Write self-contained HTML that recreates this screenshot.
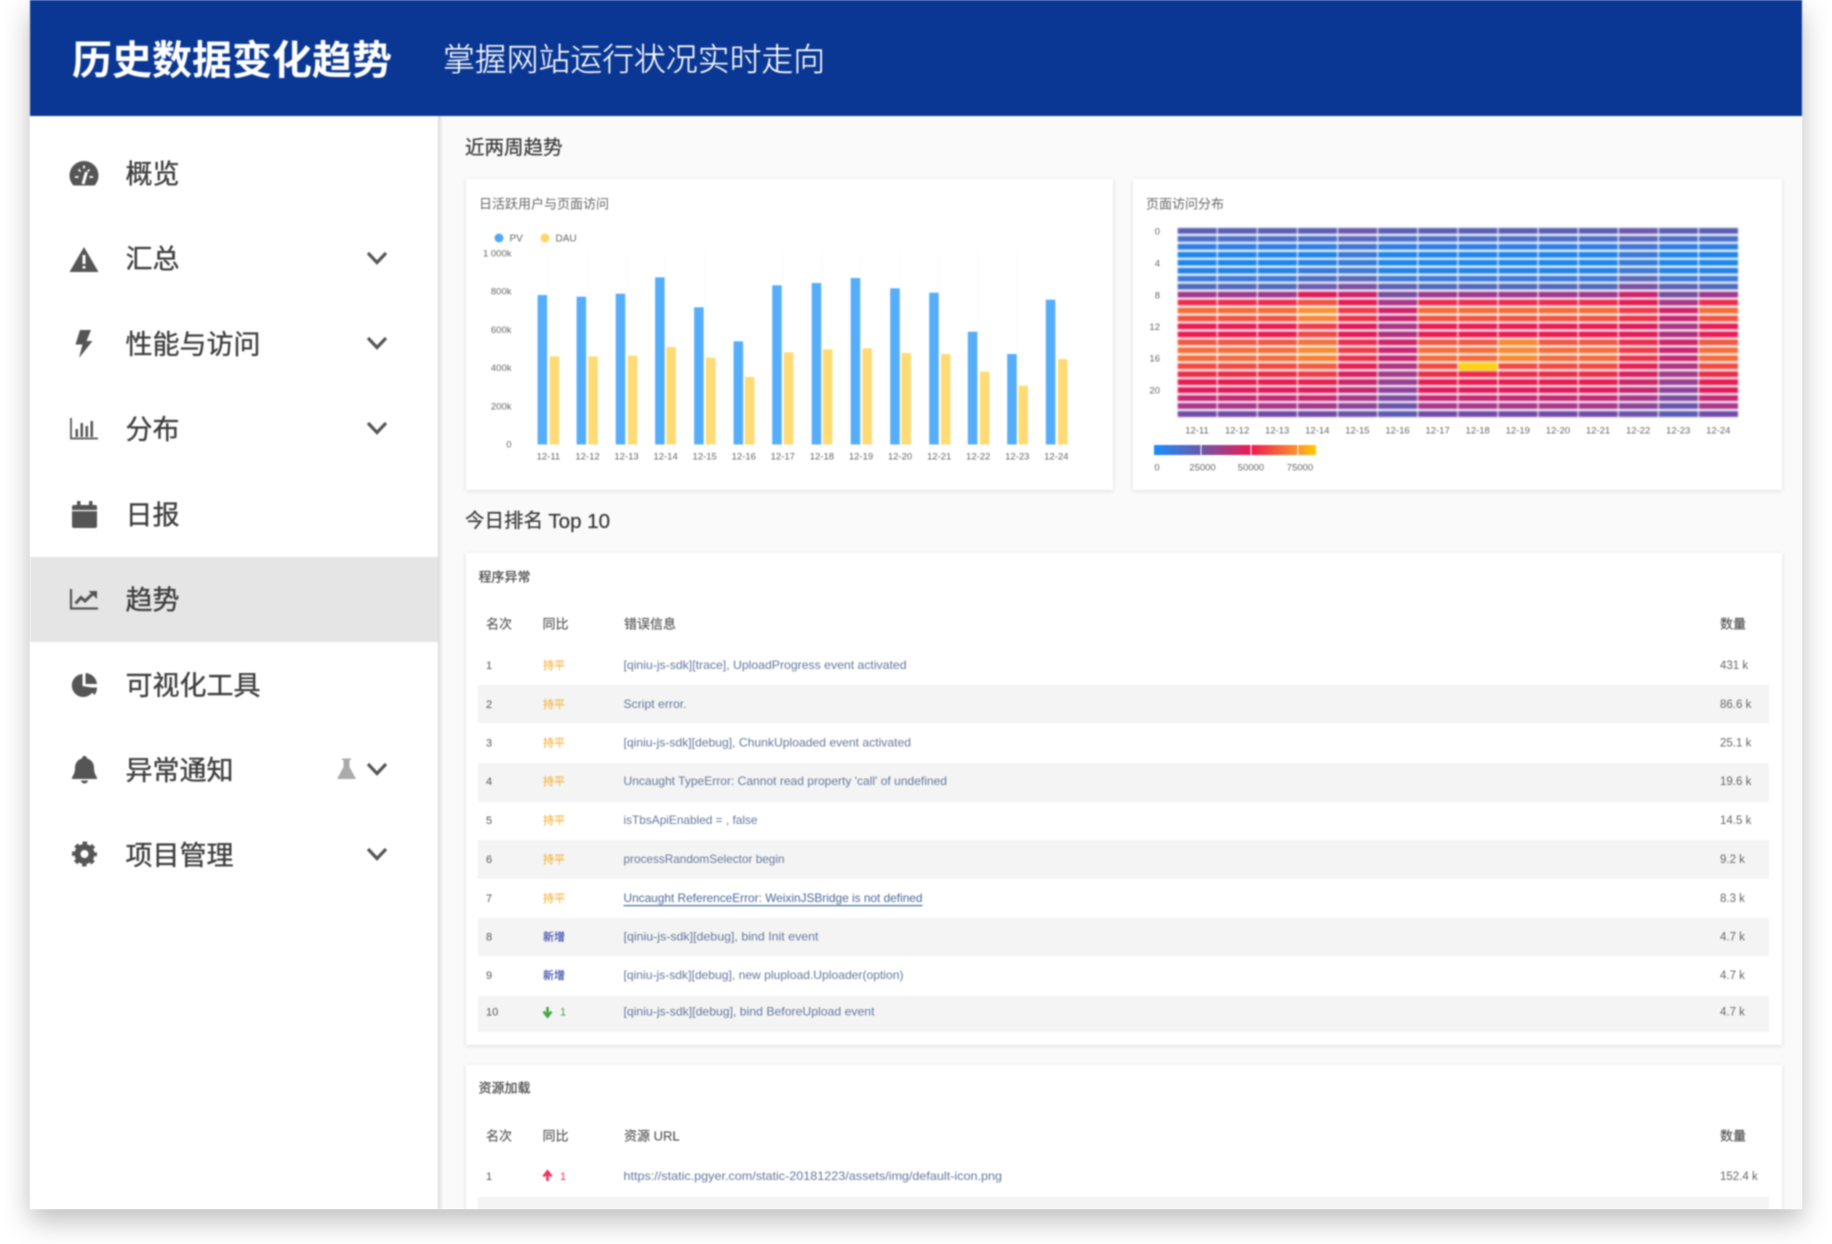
<!DOCTYPE html>
<html lang="zh"><head><meta charset="utf-8"><title>历史数据变化趋势</title>
<style>
html,body{margin:0;padding:0;background:#fff;width:1832px;height:1244px;overflow:hidden}
#sh{position:absolute;left:30px;top:0;width:1772px;height:1209px;box-shadow:0 12px 26px rgba(0,0,0,.26)}
svg{position:absolute;left:0;top:0;filter:blur(.7px)}
text{font-family:"Liberation Sans","Noto Sans CJK SC",sans-serif;dominant-baseline:central;transform:translateY(1px)}
.nav{font-size:27px;fill:#3d3d3d;stroke:#3d3d3d;stroke-width:.35px}
.sec{font-size:19.5px;fill:#3a3a3a;stroke:#3a3a3a;stroke-width:.25px}
.ct{font-size:13px;fill:#666}
.ct2{font-size:13px;fill:#444;stroke:#444;stroke-width:.2px;transform:none}
.ax{font-size:9.5px;fill:#666}
.m{text-anchor:middle;transform:none}.e{text-anchor:end}
.th{font-size:13px;fill:#555;stroke:#555;stroke-width:.15px;transform:none}
.n{font-size:11px;fill:#555}
.f{font-size:11px;fill:#f7b544;stroke:#f7b544;stroke-width:.15px}
.x{font-size:11px;fill:#4050b0;stroke:#4050b0;stroke-width:.2px}
.l{font-size:12px;fill:#64789c;transform:none}
.c{font-size:11.5px;fill:#666}
.card{filter:drop-shadow(0 1px 2px rgba(0,0,0,.12))}
.hm{filter:blur(.7px)}
#N rect,#W rect,#R rect,#P rect{width:39px;height:5.8px}
</style></head><body>
<div id="sh"></div>
<svg width="1832" height="1244" viewBox="0 0 1832 1244" xmlns="http://www.w3.org/2000/svg">
<defs>
<clipPath id="w"><rect x="30" y="0" width="1772" height="1209"/></clipPath>
<linearGradient id="sg" x1="0" x2="1"><stop offset="0" stop-color="#000" stop-opacity=".13"/><stop offset="1" stop-color="#000" stop-opacity="0"/></linearGradient>
<linearGradient id="lg" x1="0" x2="1"><stop offset="0" stop-color="#1890ff"/><stop offset=".29" stop-color="#6a58ac"/><stop offset=".6" stop-color="#ee1a50"/><stop offset=".88" stop-color="#fa9030"/><stop offset="1" stop-color="#ffcc00"/></linearGradient>
<g id="N"><rect y="0" fill="#5a5cb4"/><rect y="8" fill="#4a70c8"/><rect y="15.9" fill="#2b7de4"/><rect y="23.9" fill="#1a84ec"/><rect y="31.8" fill="#1a84ec"/><rect y="39.8" fill="#2280e6"/><rect y="47.8" fill="#3c78d8"/><rect y="55.7" fill="#5068bc"/><rect y="63.7" fill="#a0358f"/><rect y="71.6" fill="#ee2a4a"/><rect y="79.6" fill="#f56a35"/><rect y="87.6" fill="#f3503f"/><rect y="95.5" fill="#e81a50"/><rect y="103.5" fill="#ec1850"/><rect y="111.4" fill="#f3553f"/><rect y="119.4" fill="#f46c38"/><rect y="127.4" fill="#f36a3a"/><rect y="135.3" fill="#f0483f"/><rect y="143.3" fill="#ea2a48"/><rect y="151.2" fill="#e81850"/><rect y="159.2" fill="#e0185a"/><rect y="167.2" fill="#c62673"/><rect y="175.1" fill="#a83488"/><rect y="183.1" fill="#7048a8"/></g>
<g id="W"><rect y="0" fill="#5a5cb4"/><rect y="8" fill="#4a70c8"/><rect y="15.9" fill="#2b7de4"/><rect y="23.9" fill="#1a84ec"/><rect y="31.8" fill="#2280e6"/><rect y="39.8" fill="#3478dc"/><rect y="47.8" fill="#4c6cc4"/><rect y="55.7" fill="#6a5cb0"/><rect y="63.7" fill="#e0185a"/><rect y="71.6" fill="#f25040"/><rect y="79.6" fill="#fa9030"/><rect y="87.6" fill="#f88535"/><rect y="95.5" fill="#ee3a48"/><rect y="103.5" fill="#f04545"/><rect y="111.4" fill="#f5703a"/><rect y="119.4" fill="#f88a32"/><rect y="127.4" fill="#f8802f"/><rect y="135.3" fill="#f25a3a"/><rect y="143.3" fill="#ee3a45"/><rect y="151.2" fill="#e81c50"/><rect y="159.2" fill="#e0185a"/><rect y="167.2" fill="#c82670"/><rect y="175.1" fill="#a53488"/><rect y="183.1" fill="#7048a8"/></g>
<g id="R"><rect y="0" fill="#6a58ac"/><rect y="8" fill="#5a68bc"/><rect y="15.9" fill="#4074d0"/><rect y="23.9" fill="#3478d8"/><rect y="31.8" fill="#3478d8"/><rect y="39.8" fill="#3c78d4"/><rect y="47.8" fill="#5a68b8"/><rect y="55.7" fill="#7a50a4"/><rect y="63.7" fill="#d0206a"/><rect y="71.6" fill="#e81850"/><rect y="79.6" fill="#ee3a48"/><rect y="87.6" fill="#ec3048"/><rect y="95.5" fill="#e01858"/><rect y="103.5" fill="#e41854"/><rect y="111.4" fill="#ec2a4a"/><rect y="119.4" fill="#ee3a48"/><rect y="127.4" fill="#ec3048"/><rect y="135.3" fill="#e81c50"/><rect y="143.3" fill="#dc1c5e"/><rect y="151.2" fill="#cc2268"/><rect y="159.2" fill="#c02670"/><rect y="167.2" fill="#a83486"/><rect y="175.1" fill="#8c4098"/><rect y="183.1" fill="#6a50aa"/></g>
<g id="P"><rect y="0" fill="#5a5cb4"/><rect y="8" fill="#4a70c8"/><rect y="15.9" fill="#2b7de4"/><rect y="23.9" fill="#1a84ec"/><rect y="31.8" fill="#1a84ec"/><rect y="39.8" fill="#2280e6"/><rect y="47.8" fill="#3c78d8"/><rect y="55.7" fill="#5a60b4"/><rect y="63.7" fill="#7a4ca0"/><rect y="71.6" fill="#a83488"/><rect y="79.6" fill="#cc2268"/><rect y="87.6" fill="#c82470"/><rect y="95.5" fill="#a83486"/><rect y="103.5" fill="#b02c80"/><rect y="111.4" fill="#cc2268"/><rect y="119.4" fill="#c82470"/><rect y="127.4" fill="#c42670"/><rect y="135.3" fill="#b03080"/><rect y="143.3" fill="#a03a8c"/><rect y="151.2" fill="#983c90"/><rect y="159.2" fill="#8c4098"/><rect y="167.2" fill="#7c48a0"/><rect y="175.1" fill="#6a50aa"/><rect y="183.1" fill="#5a58b4"/></g>
</defs>
<g clip-path="url(#w)">
<rect x="30" y="0" width="1772" height="1209" fill="#fafafa"/>
<rect x="30" y="0" width="1772" height="116" fill="#0a3793"/>
<rect x="30" y="116" width="408" height="1093" fill="#fff"/>
<rect x="438" y="116" width="5" height="1093" fill="url(#sg)"/>
<rect x="30" y="557" width="408" height="85" fill="#e5e5e5"/>

<text x="72" y="60" font-size="40" font-weight="700" fill="#fff">历史数据变化趋势</text>
<text x="443" y="58.500" font-size="31.850" font-weight="300" fill="#fff" stroke="#fff" stroke-width=".2">掌握网站运行状况实时走向</text>

<text class="nav" x="125.500" y="173.500">概览</text>
<text class="nav" x="125.500" y="258.500">汇总</text>
<text class="nav" x="125.500" y="344">性能与访问</text>
<text class="nav" x="125.500" y="429">分布</text>
<text class="nav" x="125.500" y="514.500">日报</text>
<text class="nav" x="125.500" y="599.500">趋势</text>
<text class="nav" x="125.500" y="685">可视化工具</text>
<text class="nav" x="125.500" y="770">异常通知</text>
<text class="nav" x="125.500" y="855">项目管理</text>

<g fill="#555">
<path d="M73.500 185.500A14.500 14.500 0 1 1 94.500 185.500Z"/><path d="M75 177h3.500M89.500 177h3.500M78.500 169.500l2 2M89.500 169.500l-2 2M84 165.500v3" stroke="#fff" stroke-width="1.800"/><path d="M83 184l3.500-12" stroke="#fff" stroke-width="3"/>
<path d="M84 247L98.500 272H69.500Z"/><path d="M84 255v9M84 266v2.500" stroke="#fff" stroke-width="3"/>
<path d="M80 330H91L86.500 341H92.500L79 358L82.500 344.500H75.500Z"/>
<path d="M71 418V438.500H98" fill="none" stroke="#555" stroke-width="1.800"/><path d="M75.500 429h2.500v8h-2.500zM80.500 423h2.500v14h-2.500zM85.500 426h2.500v11h-2.500zM90.500 421h2.500v16h-2.500z"/>
<rect x="72" y="505" width="25" height="23" rx="2"/><rect x="77" y="501" width="3.500" height="6"/><rect x="89" y="501" width="3.500" height="6"/><rect x="72" y="510" width="25" height="1.200" fill="#fff"/>
<path d="M71 589V608.500H98" fill="none" stroke="#555" stroke-width="2.200"/><path d="M75.500 603.500L81 597.500L85 601L93 593.500" fill="none" stroke="#555" stroke-width="3"/><path d="M88.500 591H97V599Z"/>
<path d="M82.500 674A11.500 11.500 0 1 0 94.500 688L82.500 686Z"/><path d="M85.500 673A12 12 0 0 1 97 684H85.500Z"/><path d="M87 687.500H97A12 12 0 0 1 94.500 695Z"/>
<path d="M84.500 756c1.500 0 2.500 1 2.500 2.500c4.500 1 7 5 7 9c0 6 2 8 3 10v1.500h-25v-1.500c1-2 3-4 3-10c0-4 2.500-8 7-9c0-1.500 1-2.500 2.500-2.500z"/><path d="M81 780.500a3.500 3 0 0 0 7 0z"/>
<circle cx="84.500" cy="854" r="7" fill="none" stroke="#555" stroke-width="6"/><circle cx="84.500" cy="854" r="11" fill="none" stroke="#555" stroke-width="3" stroke-dasharray="4.500 4.140" stroke-dashoffset="2.200"/>
</g>
<path d="M342 758.500h9v1.500h-1.500V767L356 779H337L343.500 767V760H342Z" fill="#aaa"/>
<g fill="none" stroke="#555" stroke-width="3.200">
<path d="M368 253L377 262.500L386 253"/><path d="M368 338L377 347.500L386 338"/><path d="M368 423L377 432.500L386 423"/><path d="M368 764L377 773.500L386 764"/><path d="M368 849L377 858.500L386 849"/>
</g>

<text class="sec" x="465" y="147">近两周趋势</text>
<rect class="card" x="466" y="179" width="647" height="311" fill="#fff"/>
<rect class="card" x="1133" y="179" width="649" height="311" fill="#fff"/>
<text class="ct" x="479" y="203">日活跃用户与页面访问</text>
<text class="ct" x="1146" y="203">页面访问分布</text>

<path d="M548.500 253V444M587.500 253V444M626.500 253V444M665.500 253V444M705 253V444M744 253V444M783 253V444M822 253V444M861 253V444M900 253V444M939 253V444M978 253V444M1017 253V444M1056 253V444" stroke="#fafafa"/>
<circle cx="499" cy="238" r="4.500" fill="#4ea9fb"/><text x="509.500" y="238" font-size="10" fill="#666">PV</text>
<circle cx="545" cy="238" r="4.500" fill="#ffd666"/><text x="555.500" y="238" font-size="10" fill="#666">DAU</text>
<text class="ax e" x="511.500" y="253">1 000k</text><text class="ax e" x="511.500" y="291">800k</text><text class="ax e" x="511.500" y="329.500">600k</text><text class="ax e" x="511.500" y="367.500">400k</text><text class="ax e" x="511.500" y="406">200k</text><text class="ax e" x="511.500" y="444">0</text>
<g fill="#56aefb">
<rect x="537.600" y="295" width="9.500" height="149.500"/><rect x="576.600" y="296.700" width="9.500" height="147.800"/><rect x="615.700" y="293.700" width="9.500" height="150.800"/><rect x="655.100" y="277.300" width="9.500" height="167.200"/><rect x="694.100" y="307.300" width="9.500" height="137.200"/><rect x="733.600" y="341.300" width="9.500" height="103.200"/><rect x="772.200" y="285.300" width="9.500" height="159.200"/><rect x="811.700" y="283" width="9.500" height="161.500"/><rect x="850.700" y="278" width="9.500" height="166.500"/><rect x="890.200" y="288.300" width="9.500" height="156.200"/><rect x="929.200" y="292.700" width="9.500" height="151.800"/><rect x="967.800" y="331.700" width="9.500" height="112.800"/><rect x="1007.200" y="354" width="9.500" height="90.500"/><rect x="1045.800" y="299.700" width="9.500" height="144.800"/>
</g>
<g fill="#ffdb75">
<rect x="549.700" y="356.300" width="9.500" height="88.200"/><rect x="588.300" y="356.300" width="9.500" height="88.200"/><rect x="627.800" y="355.700" width="9.500" height="88.800"/><rect x="666.400" y="347" width="9.500" height="97.500"/><rect x="705.900" y="357.700" width="9.500" height="86.800"/><rect x="744.900" y="377" width="9.500" height="67.500"/><rect x="783.900" y="352.300" width="9.500" height="92.200"/><rect x="822.900" y="349.300" width="9.500" height="95.200"/><rect x="862.400" y="348.300" width="9.500" height="96.200"/><rect x="901.400" y="353" width="9.500" height="91.500"/><rect x="940.900" y="354" width="9.500" height="90.500"/><rect x="979.900" y="371.700" width="9.500" height="72.800"/><rect x="1018.500" y="385.700" width="9.500" height="58.800"/><rect x="1058" y="359" width="9.500" height="85.500"/>
</g>
<text class="ax m" x="548.400" y="457">12-11</text><text class="ax m" x="587.500" y="457">12-12</text><text class="ax m" x="626.500" y="457">12-13</text><text class="ax m" x="665.600" y="457">12-14</text><text class="ax m" x="704.700" y="457">12-15</text><text class="ax m" x="743.800" y="457">12-16</text><text class="ax m" x="782.800" y="457">12-17</text><text class="ax m" x="821.900" y="457">12-18</text><text class="ax m" x="861" y="457">12-19</text><text class="ax m" x="900" y="457">12-20</text><text class="ax m" x="939.100" y="457">12-21</text><text class="ax m" x="978.200" y="457">12-22</text><text class="ax m" x="1017.300" y="457">12-23</text><text class="ax m" x="1056.300" y="457">12-24</text>

<g class="hm" transform="translate(1177.700 228)">
<use href="#N" x="0"/><use href="#N" x="40.100"/><use href="#N" x="80.200"/><use href="#W" x="120.300"/><use href="#R" x="160.400"/><use href="#P" x="200.500"/><use href="#N" x="240.600"/><use href="#N" x="280.700"/><use href="#N" x="320.800"/><use href="#N" x="360.900"/><use href="#N" x="401"/><use href="#R" x="441.100"/><use href="#P" x="481.200"/><use href="#N" x="521.300"/>
<rect x="280.700" y="134.500" width="39" height="8" fill="#ffd21a"/>
<path d="M320.800 111.400h39v5.800h-39zM320.800 119.400h39v5.800h-39zM320.800 127.400h39v5.800h-39z" fill="#f88a32"/>
</g>
<text class="ax e" x="1160" y="231">0</text><text class="ax e" x="1160" y="263">4</text><text class="ax e" x="1160" y="295">8</text><text class="ax e" x="1160" y="326.500">12</text><text class="ax e" x="1160" y="358">16</text><text class="ax e" x="1160" y="390">20</text>
<text class="ax m" x="1197" y="431">12-11</text><text class="ax m" x="1237.100" y="431">12-12</text><text class="ax m" x="1277.200" y="431">12-13</text><text class="ax m" x="1317.300" y="431">12-14</text><text class="ax m" x="1357.400" y="431">12-15</text><text class="ax m" x="1397.500" y="431">12-16</text><text class="ax m" x="1437.600" y="431">12-17</text><text class="ax m" x="1477.700" y="431">12-18</text><text class="ax m" x="1517.800" y="431">12-19</text><text class="ax m" x="1557.900" y="431">12-20</text><text class="ax m" x="1598" y="431">12-21</text><text class="ax m" x="1638.100" y="431">12-22</text><text class="ax m" x="1678.200" y="431">12-23</text><text class="ax m" x="1718.300" y="431">12-24</text>
<rect x="1154" y="445" width="162" height="10" fill="url(#lg)"/><path d="M1201 445v10M1251 445v10M1298 445v10" stroke="#fff"/>
<text class="ax m" x="1157" y="468">0</text><text class="ax m" x="1202.500" y="468">25000</text><text class="ax m" x="1251" y="468">50000</text><text class="ax m" x="1300" y="468">75000</text>

<text class="sec" x="465" y="520">今日排名 <tspan font-size="20.500">Top 10</tspan></text>
<rect class="card" x="466" y="553" width="1316" height="492" fill="#fff"/>
<text class="ct2" x="478.500" y="577">程序异常</text>
<text class="th" x="486" y="624">名次</text><text class="th" x="542.500" y="624">同比</text><text class="th" x="624" y="624">错误信息</text><text class="th" x="1720" y="624">数量</text>
<g fill="#f4f4f4"><rect x="478" y="685" width="1291" height="38"/><rect x="478" y="763" width="1291" height="39"/><rect x="478" y="840" width="1291" height="39"/><rect x="478" y="918" width="1291" height="38"/><rect x="478" y="996" width="1291" height="36"/></g>

<text class="n" x="486" y="665">1</text><text class="f" x="543" y="665">持平</text><text class="l" x="623.500" y="665" textLength="283" lengthAdjust="spacingAndGlyphs">[qiniu-js-sdk][trace], UploadProgress event activated</text><text class="c" x="1720" y="665">431 k</text>
<text class="n" x="486" y="704">2</text><text class="f" x="543" y="704">持平</text><text class="l" x="623.500" y="704" textLength="63" lengthAdjust="spacingAndGlyphs">Script error.</text><text class="c" x="1720" y="704">86.6 k</text>
<text class="n" x="486" y="742.500">3</text><text class="f" x="543" y="742.500">持平</text><text class="l" x="623.500" y="742.500" textLength="287.500" lengthAdjust="spacingAndGlyphs">[qiniu-js-sdk][debug], ChunkUploaded event activated</text><text class="c" x="1720" y="742.500">25.1 k</text>
<text class="n" x="486" y="781">4</text><text class="f" x="543" y="781">持平</text><text class="l" x="623.500" y="781" textLength="323.500" lengthAdjust="spacingAndGlyphs">Uncaught TypeError: Cannot read property 'call' of undefined</text><text class="c" x="1720" y="781">19.6 k</text>
<text class="n" x="486" y="820">5</text><text class="f" x="543" y="820">持平</text><text class="l" x="623.500" y="820" textLength="134" lengthAdjust="spacingAndGlyphs">isTbsApiEnabled = , false</text><text class="c" x="1720" y="820">14.5 k</text>
<text class="n" x="486" y="859">6</text><text class="f" x="543" y="859">持平</text><text class="l" x="623.500" y="859" textLength="161" lengthAdjust="spacingAndGlyphs">processRandomSelector begin</text><text class="c" x="1720" y="859">9.2 k</text>
<text class="n" x="486" y="898">7</text><text class="f" x="543" y="898">持平</text><text class="l" x="623.500" y="898" textLength="299" lengthAdjust="spacingAndGlyphs" style="fill:#48699a;text-decoration:underline">Uncaught ReferenceError: WeixinJSBridge is not defined</text><text class="c" x="1720" y="898">8.3 k</text>
<text class="n" x="486" y="936.500">8</text><text class="x" x="543" y="936.500">新增</text><text class="l" x="623.500" y="936.500" textLength="195" lengthAdjust="spacingAndGlyphs">[qiniu-js-sdk][debug], bind Init event</text><text class="c" x="1720" y="936.500">4.7 k</text>
<text class="n" x="486" y="975">9</text><text class="x" x="543" y="975">新增</text><text class="l" x="623.500" y="975" textLength="280" lengthAdjust="spacingAndGlyphs">[qiniu-js-sdk][debug], new plupload.Uploader(option)</text><text class="c" x="1720" y="975">4.7 k</text>
<text class="n" x="486" y="1011.500">10</text><path d="M547.500 1007v9M543.500 1011.500l4 5l4-5" fill="none" stroke="#3fa83f" stroke-width="2.600"/><text x="560" y="1011.500" font-size="11" fill="#3fa83f">1</text><text class="l" x="623.500" y="1011.500" textLength="251" lengthAdjust="spacingAndGlyphs">[qiniu-js-sdk][debug], bind BeforeUpload event</text><text class="c" x="1720" y="1011.500">4.7 k</text>

<rect class="card" x="466" y="1065" width="1316" height="160" fill="#fff"/>
<text class="ct2" x="478.500" y="1088">资源加载</text>
<text class="th" x="486" y="1136">名次</text><text class="th" x="542.500" y="1136">同比</text><text class="th" x="624" y="1136">资源 URL</text><text class="th" x="1720" y="1136">数量</text>
<text class="n" x="486" y="1176">1</text><path d="M547.500 1181v-9M543.500 1176.500l4-5l4 5" fill="none" stroke="#f0305a" stroke-width="2.600"/><text x="560" y="1176" font-size="11" fill="#f0305a">1</text><text class="l" x="623.500" y="1176" textLength="378.500" lengthAdjust="spacingAndGlyphs">https://static.pgyer.com/static-20181223/assets/img/default-icon.png</text><text class="c" x="1720" y="1176">152.4 k</text>
<rect x="478" y="1197" width="1291" height="12" fill="#f4f4f4"/>
</g>
</svg>
</body></html>
